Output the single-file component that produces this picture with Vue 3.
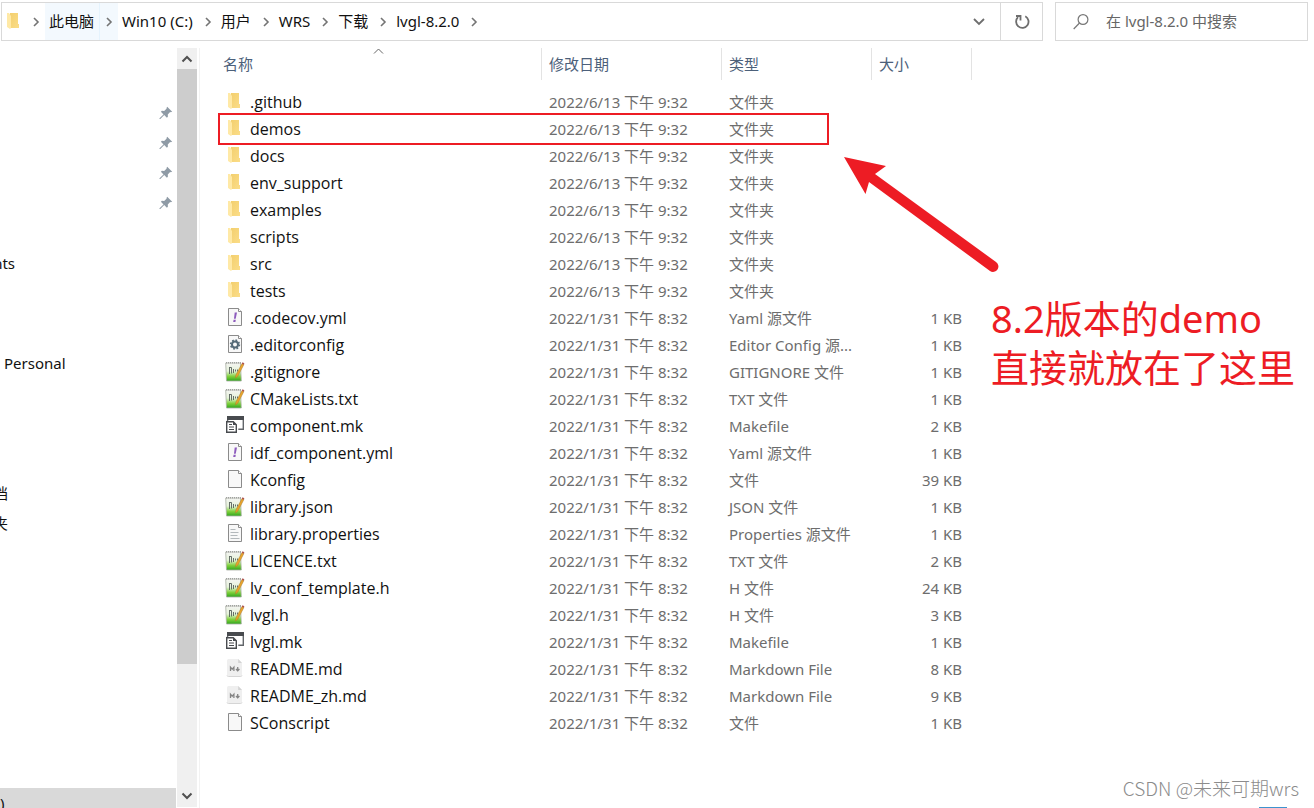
<script setup>
import { ref } from 'vue'

const crumbs = ['此电脑', 'Win10 (C:)', '用户', 'WRS', '下载', 'lvgl-8.2.0']
const query = ref('')

const folder = (name) => ({ name, icon: 'folder', date: '2022/6/13 下午 9:32', type: '文件夹', size: '' })
const file = (name, icon, type, size) => ({ name, icon, date: '2022/1/31 下午 8:32', type, size })

const entries = [
  ...['.github', 'demos', 'docs', 'env_support', 'examples', 'scripts', 'src', 'tests'].map(folder),
  file('.codecov.yml', 'yaml', 'Yaml 源文件', '1 KB'),
  file('.editorconfig', 'config', 'Editor Config 源...', '1 KB'),
  file('.gitignore', 'notepad', 'GITIGNORE 文件', '1 KB'),
  file('CMakeLists.txt', 'notepad', 'TXT 文件', '1 KB'),
  file('component.mk', 'make', 'Makefile', '2 KB'),
  file('idf_component.yml', 'yaml', 'Yaml 源文件', '1 KB'),
  file('Kconfig', 'blank', '文件', '39 KB'),
  file('library.json', 'notepad', 'JSON 文件', '1 KB'),
  file('library.properties', 'lines', 'Properties 源文件', '1 KB'),
  file('LICENCE.txt', 'notepad', 'TXT 文件', '2 KB'),
  file('lv_conf_template.h', 'notepad', 'H 文件', '24 KB'),
  file('lvgl.h', 'notepad', 'H 文件', '3 KB'),
  file('lvgl.mk', 'make', 'Makefile', '1 KB'),
  file('README.md', 'markdown', 'Markdown File', '8 KB'),
  file('README_zh.md', 'markdown', 'Markdown File', '9 KB'),
  file('SConscript', 'blank', '文件', '1 KB'),
]
</script>

<template>
  <div class="explorer">
    <svg class="defs" aria-hidden="true">
      <defs>
        <linearGradient id="g-folder" x1="0" y1="0" x2="1" y2="1">
          <stop offset="0" stop-color="#f3cf6e" />
          <stop offset="1" stop-color="#fbdd88" />
        </linearGradient>
        <linearGradient id="g-green" x1="0" y1="0" x2="0" y2="1">
          <stop offset="0" stop-color="#f4f4f2" />
          <stop offset="0.45" stop-color="#e6f3da" />
          <stop offset="0.75" stop-color="#7fd03c" />
          <stop offset="1" stop-color="#2fa51c" />
        </linearGradient>
        <symbol id="i-folder" viewBox="0 0 20 20">
          <path d="M6 1h8v11h1v4H6z" fill="url(#g-folder)" />
          <path d="M3 1h2l2 3v12l-1 1-3-2z" fill="#ffe9a6" />
        </symbol>
        <symbol id="i-page" viewBox="0 0 20 20">
          <path d="M3.5.5h10l3 3v14h-13z" fill="#f8f8f8" stroke="#8b8b8b" />
          <path d="M13.5.5v3h3" fill="#fff" stroke="#8b8b8b" />
        </symbol>
        <symbol id="i-blank" viewBox="0 0 20 20"><use href="#i-page" width="20" height="20" /></symbol>
        <symbol id="i-yaml" viewBox="0 0 20 20">
          <use href="#i-page" width="20" height="20" />
          <path d="M9.700 4.500H12l-1.300 6.200H9zM8.600 11.800h2.200l-.4 2.200H8.200z" fill="#8d5bbd" />
        </symbol>
        <symbol id="i-config" viewBox="0 0 20 20">
          <use href="#i-page" width="20" height="20" />
          <circle cx="10" cy="9.5" r="3" fill="none" stroke="#566b78" stroke-width="2" />
          <circle cx="10" cy="9.5" r="4.4" fill="none" stroke="#566b78" stroke-width="1.6" stroke-dasharray="1.7 1.755" />
        </symbol>
        <symbol id="i-lines" viewBox="0 0 20 20">
          <use href="#i-page" width="20" height="20" />
          <path d="M5.5 5.5h5M5.5 8.5h8M5.5 11.5h7M5.5 14.5h9" stroke="#b3b8bb" />
        </symbol>
        <symbol id="i-notepad" viewBox="0 0 20 20">
          <path d="M.7 1h14.800l.8 18H1.500z" fill="url(#g-green)" stroke="#a9b0a5" stroke-width=".8" />
          <path d="M1 .8h15" stroke="#888" stroke-dasharray="1 1" />
          <path d="M4.500 5v7M4.500 5.500h2v6M8.500 7v4M10.500 7.500v2M12.500 7.500v2" fill="none" stroke="#56605a" stroke-width=".9" />
          <path d="M17 1.500l1.900 1-6 11.500-2.400 2 .5-3.200z" fill="#e9a52b" stroke="#a8782d" stroke-width=".5" />
          <path d="M17.500.3l1.900.9-.8 1.500-1.800-.9z" fill="#ad544e" />
        </symbol>
        <symbol id="i-make" viewBox="0 0 20 20">
          <path d="M2 0h17v4H2z" fill="#484b4f" />
          <path d="M2.6 4v1M18.300 4v9.300h-5" fill="none" stroke="#62666a" stroke-width="1.400" />
          <path d="M1.700 5.700h6.600l3 3v7.600H1.700z" fill="#fff" stroke="#484b4f" stroke-width="1.400" />
          <path d="M4 8.500h3M4 11h5M4 13.500h5" fill="none" stroke="#484b4f" stroke-width="1.100" />
          <path d="M8 5.500l3.500 3.500H8z" fill="#484b4f" />
        </symbol>
        <symbol id="i-markdown" viewBox="0 0 20 20">
          <path d="M3.500 0h9.700l3.800 4v12q0 1.500-1.500 1.500h-12Q2 17.500 2 16V1.500Q2 0 3.500 0z" fill="#efefef" />
          <path d="M2 16.500q.3 1 1.500 1h12q1.200 0 1.500-1" fill="none" stroke="#d5d5d5" />
          <path d="M13.200 0l3.800 4h-3.800z" fill="#d3d3d3" />
          <path d="M5.500 12V8.200l1.700 2 1.700-2V12M12.700 8v3.500M11 10l1.700 1.900 1.700-1.900" fill="none" stroke="#858585" stroke-width="1.300" />
        </symbol>
        <symbol id="i-chevron" viewBox="0 0 8 10">
          <path d="M2 1l4 4-4 4" fill="none" stroke="#747474" stroke-width="1.6" />
        </symbol>
        <symbol id="i-pin" viewBox="0 0 14 14">
          <path d="M8.200.7l5 5-1.500.6-.6-.2-2.300 2.400.1 2.200-1 1L5.200 9 1.300 13H.5v-.8l4-3.800L1.900 5.700l1-.9 2.300.1 2.500-2.300-.2-.7z" fill="#8f9ba6" />
        </symbol>
      </defs>
    </svg>

    <header class="toolbar">
      <div class="address">
        <svg class="icon20 place"><use href="#i-folder" /></svg>
        <nav class="crumbs" aria-label="路径">
          <svg class="chev lead"><use href="#i-chevron" /></svg>
          <div v-for="(c, i) in crumbs" :key="c" class="crumb" :class="{ hot: i === 0 }">
            <button type="button" class="crumb-name">{{ c }}</button>
            <button type="button" class="crumb-more" :aria-label="c + ' 子文件夹'">
              <svg class="chev"><use href="#i-chevron" /></svg>
            </button>
          </div>
        </nav>
        <button type="button" class="tool history" aria-label="以前的位置">
          <svg width="12" height="8" viewBox="0 0 12 8"><path d="M1 1l5 5 5-5" fill="none" stroke="#6e6e6e" stroke-width="1.800" /></svg>
        </button>
        <button type="button" class="tool refresh" aria-label="刷新">
          <svg width="16" height="16" viewBox="0 0 16 16" fill="none" stroke="#6e6e6e" stroke-width="1.800">
            <path d="M11.300 2.200A6.200 6.200 0 1 1 4 3.200" />
            <path d="M2 2h4.500v4.500" />
          </svg>
        </button>
      </div>
      <label class="search">
        <svg width="16" height="16" viewBox="0 0 16 16" fill="none" stroke="#777" stroke-width="1.200">
          <circle cx="10" cy="5.500" r="4.900" />
          <path d="M6.500 9L.7 15" />
        </svg>
        <input v-model="query" type="text" placeholder="在 lvgl-8.2.0 中搜索" aria-label="搜索" />
      </label>
    </header>

    <div class="body">
      <aside class="side">
        <ul class="group quick">
          <li v-for="n in 4" :key="n"><svg class="pin"><use href="#i-pin" /></svg></li>
          <li></li>
          <li><span class="clip wide">nts</span></li>
        </ul>
        <ul class="group cloud"><li><span class="full">Personal</span></li></ul>
        <ul class="group docs">
          <li><span class="clip">档</span></li>
          <li><span class="clip">夹</span></li>
        </ul>
        <ul class="group drives"><li class="current"><span>)</span></li></ul>
      </aside>

      <div class="scroll" aria-hidden="true">
        <svg width="12" height="8" viewBox="0 0 12 8"><path d="M1.500 6.500L6 2l4.500 4.500" fill="none" stroke="#505050" stroke-width="2" /></svg>
        <div class="track"><div class="thumb"></div></div>
        <svg width="12" height="8" viewBox="0 0 12 8"><path d="M1.500 1.500L6 6l4.500-4.500" fill="none" stroke="#505050" stroke-width="2" /></svg>
      </div>

      <main class="files">
        <table>
          <colgroup>
            <col class="c-name" /><col class="c-date" /><col class="c-type" /><col class="c-size" />
          </colgroup>
          <thead>
            <tr>
              <th scope="col">
                名称
                <svg class="sort" width="11" height="6" viewBox="0 0 11 6"><path d="M1 5.500l4.500-4.500L10 5.500" fill="none" stroke="#666" /></svg>
              </th>
              <th scope="col">修改日期</th>
              <th scope="col">类型</th>
              <th scope="col">大小</th>
            </tr>
          </thead>
          <tbody>
            <tr v-for="e in entries" :key="e.name">
              <td class="name">
                <div class="cell">
                  <svg class="icon20"><use :href="'#i-' + e.icon" /></svg>
                  <span>{{ e.name }}</span>
                </div>
              </td>
              <td>{{ e.date }}</td>
              <td>{{ e.type }}</td>
              <td class="size">{{ e.size }}</td>
            </tr>
          </tbody>
        </table>

        <div class="frame"></div>
        <svg class="arrow" width="156" height="116" viewBox="0 0 156 116">
          <path d="M0 0L42 9 31 17 152 105a5 5 0 0 1-6 9L25 25 21.500 37z" fill="#ed1c24" />
        </svg>
        <p class="note">8.2版本的demo<br />直接就放在了这里</p>
      </main>
    </div>

    <p class="watermark">CSDN @未来可期wrs</p>
    <div class="edge"></div>
  </div>
</template>

<style>
body {
  background: #fff;
  overflow: hidden;
}
</style>

<style scoped>
.explorer {
  position: relative;
  display: flex;
  flex-direction: column;
  height: 100vh;
  overflow: hidden;
  font: 15px/20px "Noto Sans", "Noto Sans CJK SC", sans-serif;
  color: #111;
}
.defs {
  position: absolute;
  width: 0;
  height: 0;
}
button,
input {
  font: inherit;
  color: inherit;
  border: 0;
  background: none;
  padding: 0;
}
.icon20 {
  display: block;
  flex: none;
  width: 20px;
  height: 20px;
}
.chev {
  display: block;
  width: 8px;
  height: 10px;
}
.toolbar {
  display: flex;
  gap: 12px;
  padding: 2px 6px 0 1px;
}
.address,
.search {
  display: flex;
  align-items: center;
  box-sizing: border-box;
  height: 39px;
  border: 1px solid #d9d9d9;
}
.address {
  flex: 1;
}
.place {
  margin-left: 2px;
}
.crumbs {
  display: flex;
  align-items: center;
  flex: 1;
  align-self: stretch;
  padding-left: 8px;
}
.lead {
  margin-right: 5px;
}
.crumb {
  display: flex;
  align-self: stretch;
}
.crumb-name {
  padding: 0 5px 2px 4px;
}
.crumb-more {
  padding: 0 5px;
  border-left: 1px solid transparent;
}
.hot {
  background: #f3f9fe;
}
.hot .crumb-more {
  border-color: #e5f3fd;
}
.tool {
  display: flex;
  align-items: center;
  justify-content: center;
  align-self: stretch;
  width: 42px;
}
.refresh {
  border-left: 1px solid #d9d9d9;
}
.search {
  width: 253px;
  padding-left: 17px;
  gap: 17px;
}
.search input {
  flex: 1;
  min-width: 0;
  padding-bottom: 2px;
  outline: none;
}
.search input::placeholder {
  color: #666;
  opacity: 1;
}
.body {
  display: flex;
  flex: 1;
  min-height: 0;
  padding-top: 7px;
}
.side {
  width: 176px;
  padding-top: 50px;
  overflow: hidden;
}
.group {
  list-style: none;
  margin: 0;
  padding: 0;
}
.group li {
  display: flex;
  align-items: center;
  height: 30px;
}
.cloud {
  margin-top: 70px;
}
.docs {
  margin-top: 100px;
}
.drives {
  margin-top: 250px;
}
.current {
  background: #d9d9d9;
}
.pin {
  width: 14px;
  height: 14px;
  margin: 0 3px 0 auto;
}
.clip {
  display: flex;
  justify-content: flex-end;
  width: 8px;
  overflow: hidden;
}
.wide {
  width: 15px;
}
.full {
  padding-left: 4px;
}
.scroll {
  display: flex;
  flex-direction: column;
  align-items: center;
  width: 20px;
  margin: 0 2px 1px 1px;
  padding: 7px 0;
  box-sizing: border-box;
  background: #f0f0f0;
}
.track {
  flex: 1;
  width: 100%;
  padding: 6px 0;
}
.thumb {
  height: 83%;
  background: #cdcdcd;
}
.files {
  position: relative;
  flex: 1;
  padding-left: 16px;
  border-left: 1px solid #f2f2f2;
}
table {
  width: 756px;
  table-layout: fixed;
  border-collapse: separate;
  border-spacing: 0;
}
.c-name {
  width: 326px;
}
.c-date {
  width: 180px;
}
.c-type {
  width: 150px;
}
.c-size {
  width: 100px;
}
th {
  position: relative;
  height: 32px;
  padding: 0 0 0 7px;
  box-sizing: border-box;
  border-right: 1px solid #e3e3e3;
  text-align: left;
  font-weight: 400;
  color: #4c607a;
}
.sort {
  position: absolute;
  top: 0;
  left: 0;
  right: 0;
  margin: 0 auto;
}
tbody::before {
  content: "";
  display: table-row;
  height: 8px;
}
td {
  height: 27px;
  padding: 0 0 0 7px;
  color: #6d6d6d;
  white-space: nowrap;
}
.name {
  padding-left: 9px;
  color: #111;
  font-family: "Open Sans", "Noto Sans CJK SC", sans-serif;
  font-size: 16px;
}
.cell {
  display: flex;
  align-items: center;
  gap: 5px;
}
.size {
  padding-right: 10px;
  text-align: right;
}
.frame {
  position: absolute;
  left: 18px;
  top: 65px;
  width: 607px;
  height: 28px;
  border: 2px solid #ed1c24;
}
.arrow {
  position: absolute;
  left: 644px;
  top: 109px;
}
.note {
  position: absolute;
  left: 791px;
  top: 246px;
  margin: 0;
  font-size: 38px;
  line-height: 49px;
  color: #ed1c24;
  white-space: nowrap;
}
.watermark {
  position: absolute;
  right: 15px;
  bottom: 8px;
  margin: 0;
  font: 19px/24px "Noto Sans CJK SC", sans-serif;
  font-weight: 300;
  color: #8c8c8c;
}
.edge {
  position: absolute;
  right: 27px;
  bottom: 0;
  width: 28px;
  height: 1px;
  background: #3d94cf;
}
</style>
